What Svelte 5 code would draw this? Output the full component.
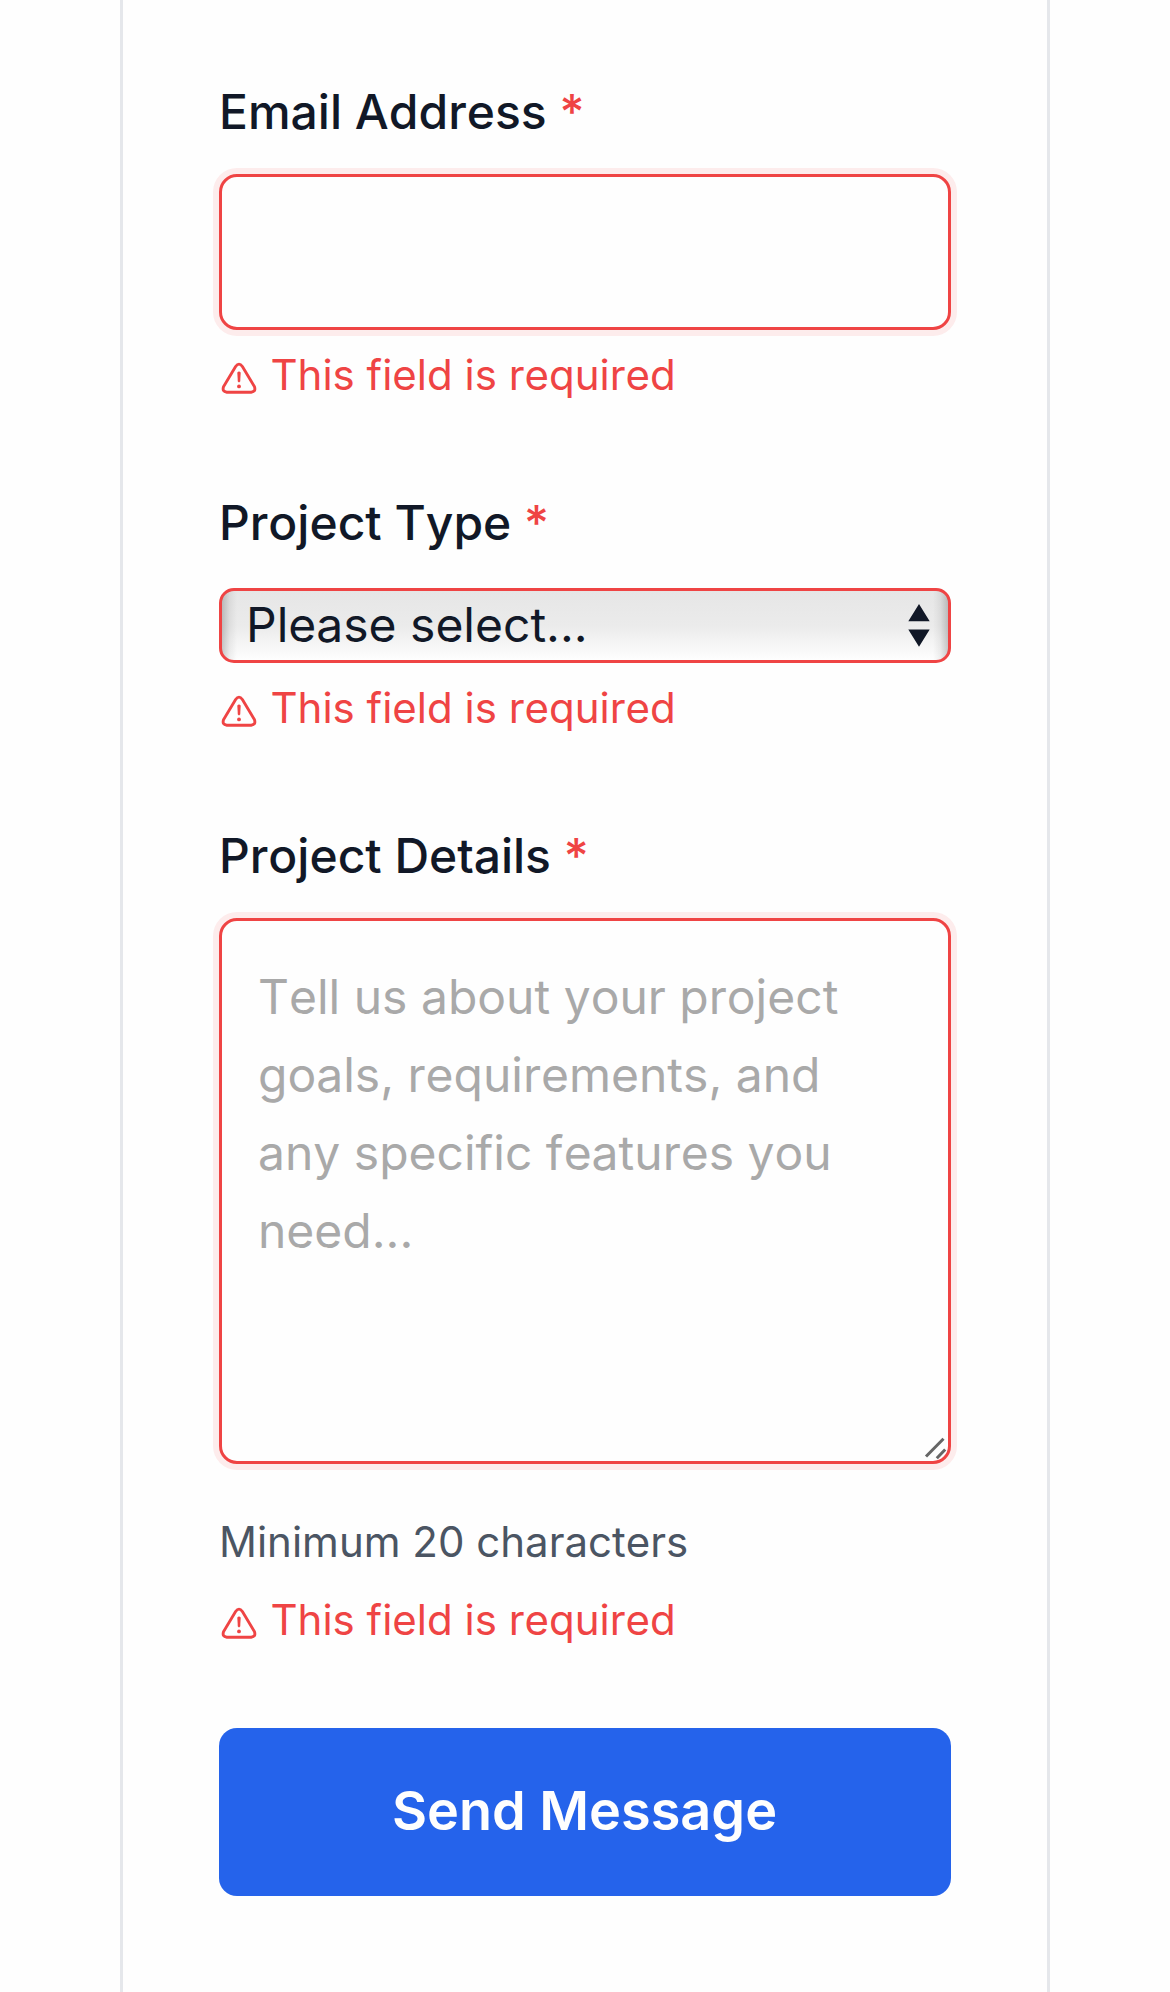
<script>
  let email = $state('');
  let details = $state('');
</script>

{#snippet error()}
  <p class="error">
    <svg class="warn" viewBox="0 0 40 36" aria-hidden="true">
      <path class="line" d="M16.600 5.500Q20 .8 23.400 5.500L35.400 25.600Q37.200 30.700 32.200 31.200H7.800Q2.800 30.700 4.600 25.600Z" />
      <path class="fill" d="M18.300 11.600Q20 9.400 21.700 11.600L21.200 20.600Q20 22.200 18.800 20.600Z" />
      <circle class="fill" cx="20" cy="25.400" r="1.900" />
    </svg>
    <span>This field is required</span>
  </p>
{/snippet}

<form class="card">
  <div class="field">
    <label for="email">Email Address <span class="star">*</span></label>
    <input id="email" class="control glow" type="email" bind:value={email} />
    {@render error()}
  </div>

  <div class="field">
    <label for="type">Project Type <span class="star">*</span></label>
    <div class="select-wrap">
      <select id="type" class="control">
        <option>Please select...</option>
      </select>
      <svg class="arrows" viewBox="0 0 22 44" aria-hidden="true">
        <path d="M11 0 21.700 17.200H.3ZM.3 25.500H21.700L11 42.800Z" />
      </svg>
    </div>
    {@render error()}
  </div>

  <div class="field">
    <label for="details">Project Details <span class="star">*</span></label>
    <div class="area-wrap">
      <textarea
        id="details"
        class="control glow"
        bind:value={details}
        placeholder="Tell us about your project goals, requirements, and any specific features you need..."
      ></textarea>
      <svg class="grip" viewBox="0 0 24 24" aria-hidden="true">
        <path d="M2 20.500 19.500 2.800M12.800 22.200 21.200 13.500" />
      </svg>
    </div>
    <p class="hint">Minimum 20 characters</p>
    {@render error()}
  </div>

  <button type="button">Send Message</button>
</form>

<style>
  :global(body) {
    background: #fefefe;
    overflow: hidden;
  }
  .card {
    box-sizing: border-box;
    width: 930px;
    height: 1992px;
    margin: 0 auto;
    padding: 73px 96px 0;
    border: solid #e5e7eb;
    border-width: 0 3px;
    font-family: Inter, sans-serif;
    font-kerning: none;
    color: #111827;
  }
  .field {
    display: flex;
    flex-direction: column;
  }
  .field + .field {
    margin-top: 76px;
  }
  label {
    font-size: 48px;
    line-height: 78px;
    font-weight: 500;
    margin-bottom: 23px;
  }
  .star {
    color: #ef4444;
  }
  .control {
    display: block;
    box-sizing: border-box;
    width: 100%;
    margin: 0;
    border: 3px solid #ef4444;
    border-radius: 18px;
    outline: none;
    background: #fefefe;
    color: #111827;
    font: 400 48px/78px Inter, sans-serif;
    font-kerning: none;
  }
  .glow {
    box-shadow: 0 0 0 6px #fdecec;
  }
  input {
    height: 156px;
    padding: 36px;
  }
  .select-wrap,
  .area-wrap {
    position: relative;
  }
  .select-wrap {
    margin-top: 3px;
  }
  select.control {
    appearance: none;
    height: 75px;
    padding: 0 24px 2px;
    border-radius: 15px;
    line-height: 67px;
    background:
      linear-gradient(90deg, rgba(0, 0, 0, 0.2), rgba(0, 0, 0, 0.06) 50%, transparent) left / 15px 100% no-repeat,
      linear-gradient(270deg, rgba(0, 0, 0, 0.2), rgba(0, 0, 0, 0.06) 50%, transparent) right / 15px 100% no-repeat,
      linear-gradient(#e6e6e6, #ebebeb 50%, #fefefe);
    background-origin: padding-box;
  }
  .arrows {
    position: absolute;
    right: 21px;
    top: 16px;
    width: 22px;
    height: 44px;
    fill: #111827;
  }
  textarea.control {
    height: 546px;
    padding: 37px 36px 35px;
    resize: none;
  }
  textarea::placeholder {
    color: #a9a9a9;
    opacity: 1;
  }
  .grip {
    position: absolute;
    right: 3px;
    bottom: 4px;
    width: 24px;
    height: 24px;
    fill: none;
    stroke: #666;
    stroke-width: 3;
  }
  .error,
  .hint {
    margin: 12px 0 0;
    font-size: 42px;
    line-height: 66px;
  }
  .hint {
    margin-top: 45px;
    color: #4b5563;
  }
  .error {
    display: flex;
    color: #ef4444;
  }
  .warn {
    width: 40px;
    height: 36px;
    margin: 19px 11.5px 0 0;
  }
  .warn .line {
    fill: none;
    stroke: #ef4444;
    stroke-width: 2.9;
  }
  .warn .fill {
    fill: #ef4444;
  }
  button {
    display: block;
    width: 100%;
    height: 168px;
    margin-top: 75px;
    padding: 0 1px 2px 0;
    border: 0;
    border-radius: 18px;
    background: #2563eb;
    color: #fefefe;
    font: 600 54px/1 Inter, sans-serif;
    font-kerning: none;
  }
</style>
